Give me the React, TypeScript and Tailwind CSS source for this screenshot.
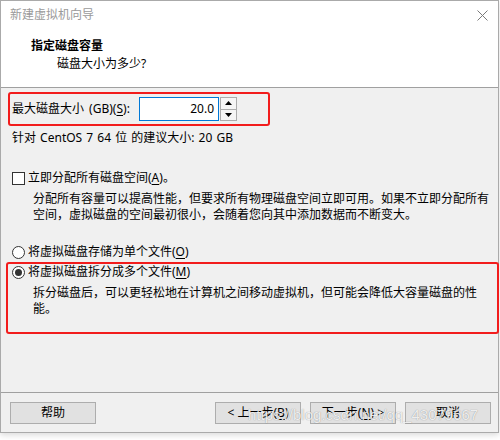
import React from "react";

const font = { fontFamily: '"Noto Sans", "Noto Sans CJK SC", sans-serif' };

function U({ c }: { c: string }) {
  return <span className="underline underline-offset-[2px]">{c}</span>;
}

function Btn({ children, w = "w-[86px]" }: { children: React.ReactNode; w?: string }) {
  return (
    <div className={`${w} h-[22px] border border-[#adadad] bg-[#e1e1e1] flex items-center justify-center text-[12px] leading-[16px] text-black`}>
      {children}
    </div>
  );
}

function Radio({ checked }: { checked?: boolean }) {
  return (
    <div className="w-[13px] h-[13px] rounded-full border border-[#333] bg-white flex items-center justify-center shrink-0">
      {checked && <div className="w-[7px] h-[7px] rounded-full bg-[#333]" />}
    </div>
  );
}

export default function App() {
  return (
    <div className="w-[500px] h-[440px] bg-white relative" style={font}>
      <div className="w-[499px] h-[433px] border border-[#aaaaaa] flex flex-col bg-[#f0f0f0] shadow-[0_2px_6px_rgba(0,0,0,0.15)]">
        {/* Title + header */}
        <div className="h-[86px] bg-white flex flex-col">
          <div className="h-[28px] flex items-center justify-between pl-[9px] pr-[10px]">
            <span className="text-[12px] leading-[16px] text-[#9a9a9a]">新建虚拟机向导</span>
            <svg width="11" height="11" viewBox="0 0 11 11">
              <path d="M0.5 0.5 L10.5 10.5 M10.5 0.5 L0.5 10.5" stroke="#7a7a7a" strokeWidth="1" />
            </svg>
          </div>
          <div className="pl-[30px] mt-[9px] text-[12px] leading-[16px] font-bold text-black">指定磁盘容量</div>
          <div className="pl-[56px] mt-[2px] text-[12px] leading-[16px] text-black">磁盘大小为多少?</div>
        </div>
        <div className="h-px bg-[#a0a0a0]" />

        {/* Body */}
        <div className="flex-1 flex flex-col text-[12px] leading-[16px] text-black">
          <div className="ml-[7px] mt-[4px] w-[262px] h-[34px] border-2 border-[#f21c1c] rounded-[3px] flex items-center pl-[2px]">
            <span className="w-[127px] shrink-0 [word-spacing:2px]">
              最大磁盘大小 (GB)(<U c="S" />):
            </span>
            <div className="w-[80px] h-[24px] border border-[#0078d7] bg-white flex items-center justify-end pr-[4px]">
              20.0
            </div>
            <div className="w-[17px] h-[24px] border border-[#acacac] bg-[#f5f5f5] flex flex-col ml-px">
              <div className="flex-1 flex items-center justify-center border-b border-[#acacac]">
                <svg width="7" height="4" viewBox="0 0 7 4"><path d="M0 4 L3.5 0 L7 4 Z" fill="#000" /></svg>
              </div>
              <div className="flex-1 flex items-center justify-center">
                <svg width="7" height="4" viewBox="0 0 7 4"><path d="M0 0 L3.5 4 L7 0 Z" fill="#000" /></svg>
              </div>
            </div>
          </div>

          <div className="ml-[11px] mt-[4px] [word-spacing:1px]">针对 CentOS 7 64 位 的建议大小: 20 GB</div>

          <div className="ml-[11px] mt-[24px] flex items-center gap-[3px]">
            <div className="w-[13px] h-[13px] border border-[#333] bg-white shrink-0" />
            <span>立即分配所有磁盘空间(<U c="A" />)。</span>
          </div>
          <div className="ml-[32px] mt-[5px] w-[460px]">
            分配所有容量可以提高性能，但要求所有物理磁盘空间立即可用。如果不立即分配所有
            <br />
            空间，虚拟磁盘的空间最初很小，会随着您向其中添加数据而不断变大。
          </div>

          <div className="ml-[11px] mt-[21px] flex items-center gap-[3px]">
            <Radio />
            <span>将虚拟磁盘存储为单个文件(<U c="O" />)</span>
          </div>

          <div className="ml-[5px] mt-[2px] w-[493px] h-[72px] border-2 border-[#f21c1c] rounded-[3px] pl-[4px]">
            <div className="flex items-center gap-[3px]">
              <Radio checked />
              <span>将虚拟磁盘拆分成多个文件(<U c="M" />)</span>
            </div>
            <div className="ml-[21px] mt-[5px]">
              拆分磁盘后，可以更轻松地在计算机之间移动虚拟机，但可能会降低大容量磁盘的性
              <br />
              能。
            </div>
          </div>
        </div>

        <div className="h-px bg-[#a0a0a0]" />
        {/* Footer */}
        <div className="h-[39px] flex items-start pt-[9px] pl-[9px]">
          <Btn>帮助</Btn>
          <div className="ml-[119px]">
            <Btn>&lt; 上一步(<U c="B" />)</Btn>
          </div>
          <div className="ml-[9px]">
            <Btn>下一步(<U c="N" />) &gt;</Btn>
          </div>
          <div className="ml-[9px]">
            <Btn>取消</Btn>
          </div>
        </div>
      </div>
      <div
        className="absolute left-[248px] top-[406px] text-[15px] leading-[18px] text-white/85 [text-shadow:0_0_1px_rgba(0,0,0,0.45)] pointer-events-none"
        style={{ fontFamily: '"Liberation Sans", Arial, sans-serif' }}
      >
        https://blog.csdn.net/qq_43079667
      </div>
    </div>
  );
}
